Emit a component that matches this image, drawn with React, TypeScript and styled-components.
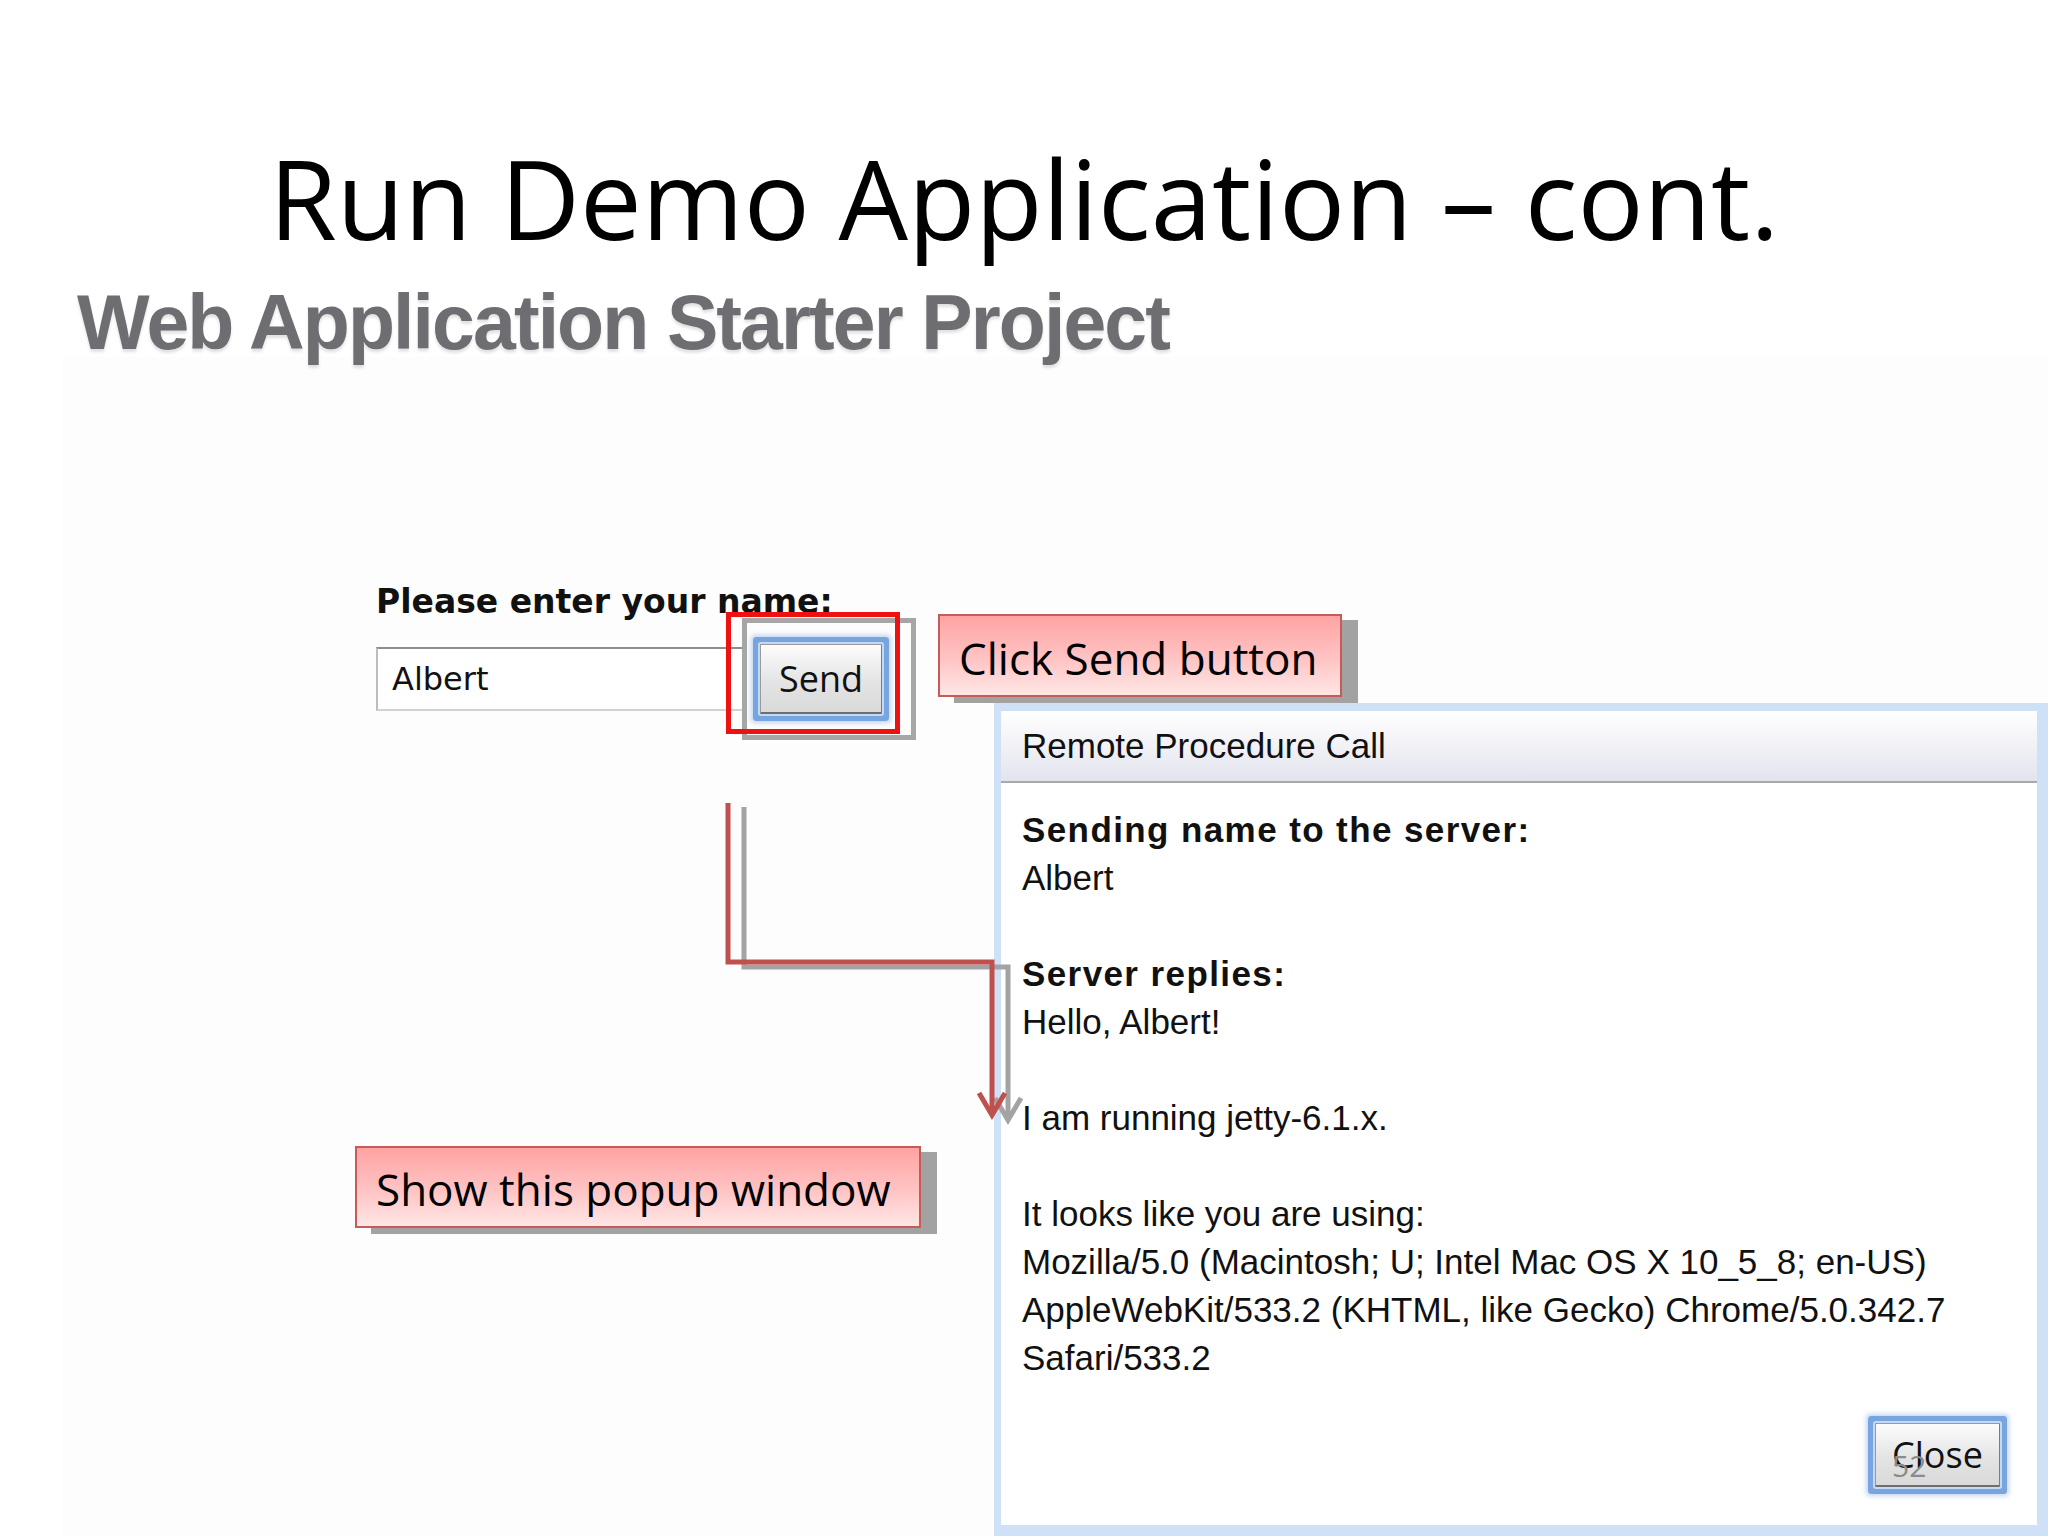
import React from "react";

import styled, { createGlobalStyle } from "styled-components";

const GlobalStyle = createGlobalStyle`
  html, body {
    margin: 0;
    padding: 0;
    background: #ffffff;
  }
`;

const replyLines = [
  { text: "Sending name to the server:", bold: true },
  { text: "Albert" },
  { text: "" },
  { text: "Server replies:", bold: true },
  { text: "Hello, Albert!" },
  { text: "" },
  { text: "I am running jetty-6.1.x." },
  { text: "" },
  { text: "It looks like you are using:" },
  { text: "Mozilla/5.0 (Macintosh; U; Intel Mac OS X 10_5_8; en-US)" },
  { text: "AppleWebKit/533.2 (KHTML, like Gecko) Chrome/5.0.342.7" },
  { text: "Safari/533.2" },
];

const Arrow = () => (
  <ArrowLayer viewBox="0 0 2048 1536">
    <g fill="none" strokeWidth="5" strokeLinejoin="miter">
      <path d="M744 807 V967 H1008 V1116" stroke="#a3a3a3" />
      <polyline points="995,1098 1008,1120 1021,1098" stroke="#a3a3a3" />
      <path d="M728 803 V962 H992 V1111" stroke="#c0504d" />
      <polyline points="979,1093 992,1115 1005,1093" stroke="#c0504d" />
    </g>
  </ArrowLayer>
);

export default function App() {
  return (
    <>
      <GlobalStyle />
      <Slide>
        <Title>Run Demo Application – cont.</Title>
        <PageHeading>Web Application Starter Project</PageHeading>
        <Shot>
          <Form>
            <Label>Please enter your name:</Label>
            <Row>
              <NameInput defaultValue="Albert" readOnly />
              <GwtButton $width={122} $height={70} $gap={14}>
                Send
              </GwtButton>
            </Row>
          </Form>
        </Shot>

        <Popup>
          <PopupCaption>Remote Procedure Call</PopupCaption>
          <PopupBody>
            {replyLines.map((line, i) => (
              <Line key={i} $bold={line.bold}>
                {line.text || "\u00a0"}
              </Line>
            ))}
            <PopupFooter>
              <GwtButton $width={125} $height={64} $gap={0}>
                Close
              </GwtButton>
            </PopupFooter>
          </PopupBody>
        </Popup>

        <Highlight />
        <Arrow />

        <Callout $left={938} $top={614} $width={404} $height={83}>
          Click Send button
        </Callout>
        <Callout $left={355} $top={1146} $width={566} $height={82}>
          Show this popup window
        </Callout>

        <SlideNumber>52</SlideNumber>
      </Slide>
    </>
  );
}

const Slide = styled.div`
  position: relative;
  width: 2048px;
  height: 1536px;
  overflow: hidden;
  background: #ffffff;
`;

const Title = styled.h1`
  margin: 122px 0 0;
  font-family: "Open Sans", sans-serif;
  font-weight: 400;
  font-size: 110px;
  line-height: 150px;
  text-align: center;
  color: #000000;
`;

const PageHeading = styled.h2`
  margin: 15px 0 0 77px;
  font-family: "Liberation Sans", Arial, sans-serif;
  font-weight: 700;
  font-size: 77px;
  line-height: 70px;
  letter-spacing: -1.9px;
  color: #6d6d72;
  text-shadow: 0 3px 3px rgba(0, 0, 0, 0.12);
`;

const Shot = styled.div`
  margin-left: 63px;
  height: 1180px;
  padding-left: 14px;
  box-sizing: border-box;
  background: #fdfdfd;
  overflow: hidden;
`;

const Form = styled.div`
  margin: 226px 0 0 299px;
`;

const Label = styled.div`
  font-family: "DejaVu Sans", sans-serif;
  font-weight: 700;
  font-size: 33px;
  line-height: 38px;
  color: #111111;
`;

const Row = styled.div`
  display: flex;
  align-items: center;
  margin-top: 23px;
`;

const NameInput = styled.input`
  width: 370px;
  height: 64px;
  box-sizing: border-box;
  padding: 0 0 0 14px;
  border: 2px solid;
  border-color: #8d8d8d #d2d2d2 #d2d2d2 #bdbdbd;
  background: #ffffff;
  font-family: "DejaVu Sans", sans-serif;
  font-size: 32px;
  color: #111111;
  outline: none;
`;

const GwtButton = styled.button<{ $width: number; $height: number; $gap: number }>`
  width: ${(p) => p.$width}px;
  height: ${(p) => p.$height}px;
  margin-left: ${(p) => p.$gap}px;
  padding: 0;
  box-sizing: border-box;
  border: 1px solid #9a9a9a;
  border-bottom: 2px solid #6e6e6e;
  border-right-color: #7c7c7c;
  background: linear-gradient(#fcfcfc, #e4e4e4 55%, #d9d9d9);
  font-family: "Open Sans", sans-serif;
  font-size: 36px;
  color: #111111;
  box-shadow: 0 0 0 2px #c4daf4, 0 0 0 7px #78a5e0, 0 0 5px 9px rgba(120, 165, 224, 0.45);
  border-radius: 1px;
`;

const Popup = styled.div`
  position: absolute;
  left: 994px;
  top: 703px;
  width: 1054px;
  height: 833px;
  box-sizing: border-box;
  border-style: solid;
  border-width: 8px 11px 11px 7px;
  border-color: #cfe1f6;
  background: #ffffff;
  display: flex;
  flex-direction: column;
`;

const PopupCaption = styled.div`
  height: 70px;
  padding-left: 21px;
  border-bottom: 2px solid #a9a9ab;
  background: linear-gradient(#ffffff, #f3f3f7 45%, #e2e3ef);
  font-family: "Liberation Sans", Arial, sans-serif;
  font-size: 35px;
  line-height: 70px;
  color: #111111;
`;

const PopupBody = styled.div`
  flex: 1;
  display: flex;
  flex-direction: column;
  padding: 23px 0 0 21px;
  font-family: "Liberation Sans", Arial, sans-serif;
  font-size: 35px;
  line-height: 48px;
  color: #111111;
`;

const Line = styled.div<{ $bold?: boolean }>`
  font-weight: ${(p) => (p.$bold ? 700 : 400)};
  letter-spacing: ${(p) => (p.$bold ? "1.4px" : "0")};
  white-space: pre;
`;

const PopupFooter = styled.div`
  margin-top: auto;
  display: flex;
  justify-content: flex-end;
  padding: 0 37px 38px 0;
`;

const Highlight = styled.div`
  position: absolute;
  left: 726px;
  top: 612px;
  width: 174px;
  height: 122px;
  box-sizing: border-box;
  border: 5px solid #ee1111;
  filter: drop-shadow(16px 6px 0 #a6a6a6);
`;

const ArrowLayer = styled.svg`
  position: absolute;
  left: 0;
  top: 0;
  width: 2048px;
  height: 1536px;
  pointer-events: none;
`;

const Callout = styled.div<{ $left: number; $top: number; $width: number; $height: number }>`
  position: absolute;
  left: ${(p) => p.$left}px;
  top: ${(p) => p.$top}px;
  width: ${(p) => p.$width}px;
  height: ${(p) => p.$height}px;
  box-sizing: border-box;
  padding: 4px 0 0 19px;
  display: flex;
  align-items: center;
  border: 2px solid #c65b58;
  background: linear-gradient(#ffa3a3, #ffc4c4 55%, #ffe6e6);
  box-shadow: 16px 6px 0 #a2a2a2;
  font-family: "Open Sans", sans-serif;
  font-size: 44px;
  color: #000000;
  white-space: nowrap;
`;

const SlideNumber = styled.div`
  position: absolute;
  left: 1892px;
  top: 1445px;
  font-family: "Open Sans", sans-serif;
  font-size: 30px;
  line-height: 41px;
  color: #8b8b8b;
`;
